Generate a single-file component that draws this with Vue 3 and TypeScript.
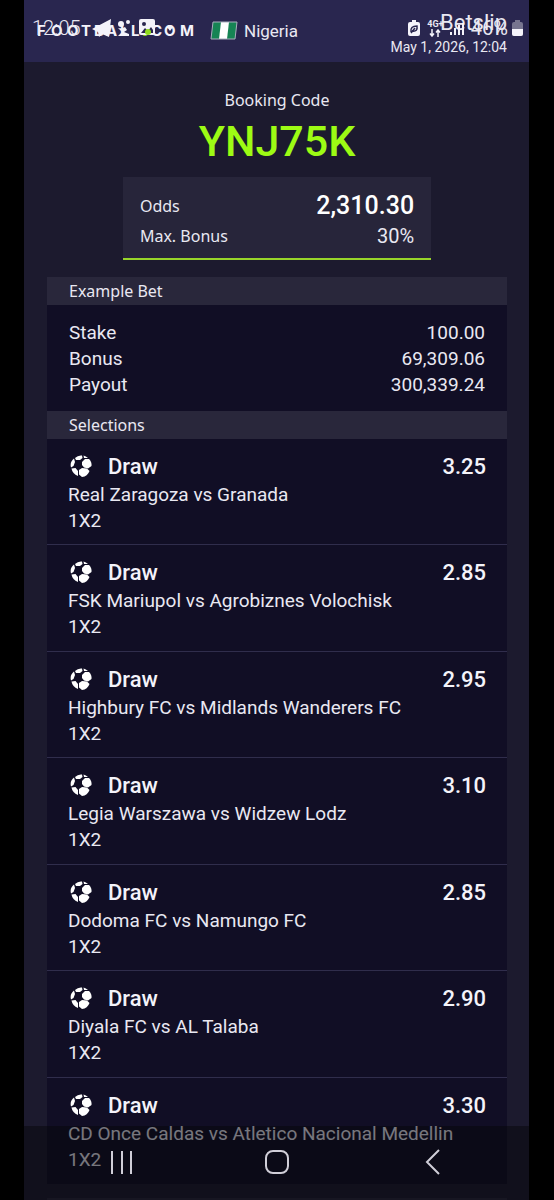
<script setup lang="ts">
interface Selection {
  pick: string
  odds: string
  match: string
  market: string
}

interface Amount {
  label: string
  value: string
}

const amounts: Amount[] = [
  { label: 'Stake', value: '100.00' },
  { label: 'Bonus', value: '69,309.06' },
  { label: 'Payout', value: '300,339.24' },
]

const selections: Selection[] = [
  { pick: 'Draw', odds: '3.25', match: 'Real Zaragoza vs Granada', market: '1X2' },
  { pick: 'Draw', odds: '2.85', match: 'FSK Mariupol vs Agrobiznes Volochisk', market: '1X2' },
  { pick: 'Draw', odds: '2.95', match: 'Highbury FC vs Midlands Wanderers FC', market: '1X2' },
  { pick: 'Draw', odds: '3.10', match: 'Legia Warszawa vs Widzew Lodz', market: '1X2' },
  { pick: 'Draw', odds: '2.85', match: 'Dodoma FC vs Namungo FC', market: '1X2' },
  { pick: 'Draw', odds: '2.90', match: 'Diyala FC vs AL Talaba', market: '1X2' },
  { pick: 'Draw', odds: '3.30', match: 'CD Once Caldas vs Atletico Nacional Medellin', market: '1X2' },
]
</script>

<template>
  <div class="phone">
    <div class="status">
      <div class="status-left">
        <span class="clock">12:05</span>
        <svg class="notices" viewBox="0 0 64 18" aria-hidden="true">
          <path d="M0 10 19 0 17 18 10 15 7 18 6 13Z" fill="#f4f3fa" />
          <g fill="#f4f3fa">
            <circle cx="29" cy="5" r="3" />
            <circle cx="36" cy="3" r="2" />
            <path d="M26 9q4 1 7-1l2 3-3 2 5 2v2H26l4-4z" />
          </g>
          <rect x="47" y="0" width="16" height="16" rx="2" fill="#f4f3fa" />
          <path d="m49 14 4-5 3 3 3-4 2 3v3z" fill="#29264f" />
          <circle cx="52" cy="5" r="2" fill="#29264f" />
          <circle cx="56" cy="13" r="3" fill="#8fdc1c" />
        </svg>
      </div>
      <div class="status-right">
        <svg class="saver" viewBox="0 0 12 17" aria-hidden="true">
          <path d="M4 0h4v2h2q2 0 2 2v10q0 2-2 2H2q-2 0-2-2V4q0-2 2-2h2z" fill="#f4f3fa" />
          <path d="M3 12q-1-6 6-6 1 6-5 5M3 13l4-5" fill="none" stroke="#29264f" stroke-width="1.5" />
        </svg>
        <div class="network">
          <span>4G+</span>
          <svg viewBox="0 0 12 8" aria-hidden="true">
            <path d="M3 0v7M1 4.500 3 7l2-2.500M9 8V1M7 3.500 9 1l2 2.500" fill="none" stroke="#f4f3fa" stroke-width="1.5" />
          </svg>
        </div>
        <svg class="signal" viewBox="0 0 14 14" aria-hidden="true">
          <path d="M0 11h2v3H0zM4 7h2v7H4zM8 4h2v10H8zM12 2h2v12h-2z" fill="#f4f3fa" />
        </svg>
        <span class="percent">46%</span>
        <svg class="battery" viewBox="0 0 11 17" aria-hidden="true">
          <path d="M3 0h5v2h1q2 0 2 2v10q0 2-2 2H2q-2 0-2-2V4q0-2 2-2h1z" fill="#77758f" />
          <path d="M0 9h11v5q0 2-2 2H2q-2 0-2-2z" fill="#f4f3fa" />
        </svg>
      </div>
    </div>

    <header class="top">
      <div class="brand">
        <svg class="logo" viewBox="0 0 158 20" role="img" aria-label="Football.com">
          <text x="1 15 31 45 58 70 84 95" y="15">FOOTBALL</text>
          <circle cx="109" cy="12" r="3" fill="#8fdc1c" />
          <text x="115 128 144" y="15">COM</text>
          <path d="m131 6 3 4 3-4z" fill="#f4f3fa" />
        </svg>
        <svg class="flag" viewBox="0 0 28 20" role="img" aria-label="Flag of Nigeria">
          <path d="M3 1h24l-2 17H1z" fill="#168454" />
          <path d="M11 1h8l-2 17H9z" fill="#fff" />
          <path d="M3 1h24l-2 17H1z" fill="none" stroke="#a9aebd" stroke-width="1" />
        </svg>
        <span class="country">Nigeria</span>
      </div>
      <div class="slip">
        <h1>Betslip</h1>
        <time datetime="2026-05-01T12:04">May 1, 2026, 12:04</time>
      </div>
    </header>

    <main>
      <section class="booking">
        <p class="booking-label">Booking Code</p>
        <p class="code">YNJ75K</p>
        <dl class="summary">
          <div><dt>Odds</dt><dd class="total">2,310.30</dd></div>
          <div><dt>Max. Bonus</dt><dd>30%</dd></div>
        </dl>
      </section>

      <section class="card">
        <h2>Example Bet</h2>
        <dl class="amounts">
          <div v-for="a in amounts" :key="a.label"><dt>{{ a.label }}</dt><dd>{{ a.value }}</dd></div>
        </dl>
        <h2>Selections</h2>
        <ul class="selections">
          <li v-for="s in selections" :key="s.match">
            <div class="pick">
              <svg class="ball" viewBox="0 0 22 22" aria-hidden="true">
                <g fill="#fff">
                  <path d="M5 3Q8 0 12 .500L12.500 3 10 5 6 5z" />
                  <path d="M13.500 .500Q16 1 18 3L14 3z" />
                  <path d="M12 7 15 4 19 4Q22 7 21.500 11L18 13.500 14 12.500 12 10z" />
                  <path d="M4 3.500 5 7 3.500 11 1 12.500Q-.500 7 4 3.500z" />
                  <path d="M1.500 13.500 5.500 13 8 16V21Q2.500 19 1.500 13.500z" />
                  <path d="M9 15 12 13 17 13.500 19.500 16Q17.500 21.500 12 22L9 19.500z" />
                </g>
              </svg>
              <span>{{ s.pick }}</span>
              <span class="odds">{{ s.odds }}</span>
            </div>
            <p>{{ s.match }}</p>
            <p>{{ s.market }}</p>
          </li>
        </ul>
      </section>
      <div class="next-card"></div>
    </main>

    <nav class="system-nav" aria-label="System navigation">
      <button type="button" aria-label="Recent apps">
        <svg viewBox="0 0 28 28"><path d="M4 2v23M14 2v23M23 2v23" /></svg>
      </button>
      <button type="button" aria-label="Home">
        <svg viewBox="0 0 28 28"><rect x="3" y="2" width="22" height="22" rx="7" /></svg>
      </button>
      <button type="button" aria-label="Back">
        <svg viewBox="0 0 28 28"><path d="M21 1 9 13l12 12" /></svg>
      </button>
    </nav>
  </div>
</template>

<style>
body {
  margin: 0;
  background: #000;
}
</style>

<style scoped>
* {
  box-sizing: border-box;
}

.phone {
  position: relative;
  height: 100vh;
  margin: 0 25px 0 24px;
  overflow: hidden;
  background: #1c1a2e;
  color: #e9e8f2;
  font-family: "Noto Sans", Roboto, sans-serif;
}

h1,
h2,
p,
dl,
dd,
ul {
  margin: 0;
  padding: 0;
  font-weight: 400;
}

.status {
  position: absolute;
  inset: 0 0 auto;
  display: flex;
  justify-content: space-between;
  align-items: center;
  height: 56px;
  padding: 0 6px 0 8px;
}

.status-left,
.status-right {
  display: flex;
  align-items: center;
}

.clock {
  width: 60px;
  font: 300 20px/24px Roboto, sans-serif;
}

.notices {
  width: 64px;
  height: 18px;
}

.saver {
  width: 12px;
  height: 17px;
  margin-right: 8px;
}

.network {
  display: flex;
  flex-direction: column;
  align-items: center;
  width: 15px;
  font: 700 9px/9px Roboto, sans-serif;
}

.network svg {
  width: 12px;
  height: 8px;
}

.signal {
  width: 14px;
  height: 14px;
  margin: 0 7px;
}

.percent {
  margin-right: 4px;
  font: 400 20px/24px Roboto, sans-serif;
}

.battery {
  width: 11px;
  height: 17px;
}

.top {
  display: flex;
  justify-content: space-between;
  height: 62px;
  padding: 10px 22px 0 12px;
  background: #29264f;
}

.brand {
  display: flex;
  align-items: center;
  height: 42px;
}

.logo {
  width: 158px;
  height: 20px;
  margin-right: 16px;
}

.logo text {
  fill: #f4f3fa;
  font: 700 15px Inter, sans-serif;
}

.flag {
  width: 28px;
  height: 20px;
  margin-right: 6px;
}

.country {
  font-family: Roboto, sans-serif;
  font-size: 17px;
}

.slip {
  text-align: right;
}

.slip h1 {
  font: 400 22px/26px Roboto, sans-serif;
}

.slip time {
  display: block;
  font: 400 14px/22px Roboto, sans-serif;
}

main {
  padding: 0 22px 0 23px;
}

.booking {
  display: flex;
  flex-direction: column;
  align-items: center;
  padding-top: 27px;
}

.booking-label {
  font-size: 16px;
  line-height: 22px;
}

.code {
  color: #9dfb14;
  font: 500 43px/60px Roboto, sans-serif;
}

.summary {
  width: 67%;
  margin-top: 6px;
  padding: 14px 17px 7px;
  border-bottom: 2px solid #98d52a;
  background: #27253a;
}

.summary div,
.amounts div {
  display: flex;
  justify-content: space-between;
  align-items: center;
}

.summary div {
  height: 30px;
}

.summary dt {
  font-size: 16px;
}

.summary dd {
  font: 400 20px/30px Roboto, sans-serif;
}

.summary .total {
  color: #fff;
  font-size: 25px;
  font-weight: 500;
}

.card {
  margin-top: 17px;
  background: #110e25;
}

.card h2 {
  padding: 0 22px;
  background: #29273b;
  font-size: 16px;
  line-height: 28px;
}

.amounts {
  padding: 15px 22px 13px;
  font: 400 19px/26px Roboto, sans-serif;
}

.selections {
  display: grid;
  grid-auto-rows: 1fr;
  min-height: 745px;
  list-style: none;
}

.selections li {
  padding: 13px 21px 10px;
  border-bottom: 1px solid #302d4c;
  font: 400 19px/26px Roboto, sans-serif;
}

.selections li:last-child {
  border-bottom: 0;
}

.pick {
  display: flex;
  align-items: center;
  height: 30px;
  color: #f4f3fa;
  font-size: 22px;
  font-weight: 500;
}

.ball {
  width: 22px;
  height: 22px;
  margin: 0 16px 2px 2px;
}

.odds {
  margin-left: auto;
}

.next-card {
  height: 40px;
  margin-top: 14px;
  background: #29273b;
}

.system-nav {
  position: absolute;
  inset: auto 0 0;
  display: flex;
  justify-content: space-around;
  height: 74px;
  padding: 0 20px;
  background: rgb(6 6 9 / 50%);
}

.system-nav button {
  padding: 0;
  border: 0;
  background: none;
}

.system-nav svg {
  display: block;
  width: 28px;
  height: 28px;
  fill: none;
  stroke: #d0ced8;
  stroke-width: 2;
}
</style>
